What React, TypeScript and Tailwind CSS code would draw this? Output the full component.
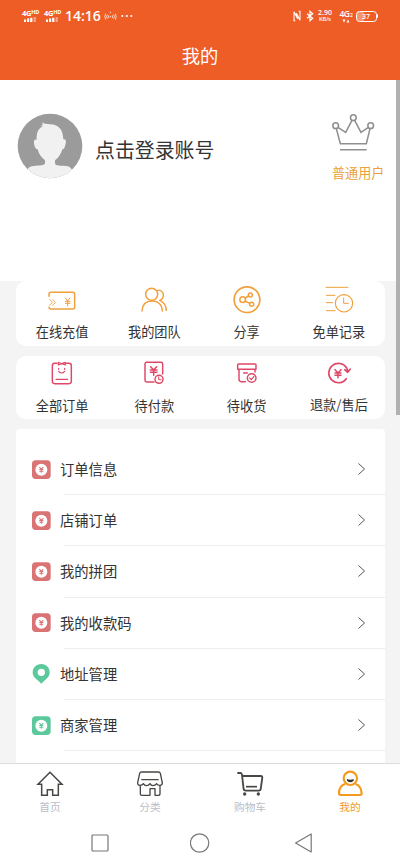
import type { ReactNode } from 'react';

const FONT = "font-['Noto_Sans_CJK_SC','Noto_Sans',sans-serif]";

function SignalGroup() {
  return (
    <div className="flex w-[18px] flex-col items-start">
      <div className="flex h-[6px] items-start font-['Open_Sans',sans-serif] font-bold leading-[6px]">
        <span className="text-[7.5px] tracking-[-0.3px]">4G</span>
        <span className="text-[5.5px] leading-[5px]">HD</span>
      </div>
      <svg width="14" height="5" viewBox="0 0 14 5" className="ml-[2px] mt-[1px]" fill="#fff">
        <rect x="0" y="2.5" width="2" height="2.5" />
        <rect x="3" y="1.5" width="2.2" height="3.5" />
        <rect x="6.2" y="0.8" width="2.2" height="4.2" />
        <rect x="9.6" y="0" width="2.2" height="5" opacity="0.45" />
      </svg>
    </div>
  );
}

function StatusBar() {
  return (
    <div className="flex h-8 items-center pl-[22px] pr-[22px] text-white">
      <SignalGroup />
      <div className="w-[4px]" />
      <SignalGroup />
      <span className="ml-[3px] w-[36px] whitespace-nowrap font-['Open_Sans',sans-serif] text-[14px] font-semibold leading-4">14:16</span>
      <svg width="13" height="12" viewBox="0 0 39 36" className="ml-[3px]" fill="none" stroke="#fff" strokeWidth="2.2">
        <path d="M5 11Q0 20 5 29M10 14Q6 20 10 26M34 11Q39 20 34 29M29 14Q33 20 29 26M14 16V24M25 16V24M19 5V10M19 18V22" />
      </svg>
      <svg width="12" height="4" viewBox="0 0 12 4" className="ml-[4px]" fill="#fff">
        <circle cx="1.3" cy="2" r="1.1" />
        <circle cx="5.8" cy="2" r="1.1" />
        <circle cx="10.3" cy="2" r="1.1" />
      </svg>
      <div className="flex-1" />
      <svg width="8" height="12" viewBox="0 0 24 36" className="-translate-x-px" fill="none" stroke="#fff" strokeWidth="3.2">
        <path d="M7 32H3V5L14 26V14M17 4H21V31L10 10V22" />
      </svg>
      <svg width="8" height="12" viewBox="0 0 24 36" className="ml-[4px]" fill="none" stroke="#fff" strokeWidth="3.8">
        <path d="M3 11L20 25L12 32V4L20 11L3 25" />
      </svg>
      <div className="ml-[4px] flex w-[15px] flex-col items-center font-['Open_Sans',sans-serif] font-semibold">
        <span className="text-[7px] leading-[7px]">2.90</span>
        <span className="whitespace-nowrap text-[5.5px] leading-[7px]">KB/s</span>
      </div>
      <div className="ml-[7px] flex w-[13px] flex-col font-['Open_Sans',sans-serif] font-semibold">
        <div className="flex items-end leading-[8px]">
          <span className="text-[8.5px] tracking-[-0.5px]">4G</span>
          <span className="ml-[0.5px] text-[5px] leading-[6px]">2</span>
        </div>
        <svg width="8" height="4" viewBox="0 0 8 4" className="ml-[2px] mt-[1px]" fill="#fff">
          <path d="M0.5 0.5H3.5L2 3.5ZM4.5 3.5H7.5L6 0.5Z" />
        </svg>
      </div>
      <div className="ml-[3px] flex items-center">
        <div className="flex h-[11px] w-[21px] items-center justify-center rounded-[3.5px] border border-white bg-gradient-to-r from-white/35 from-37% to-transparent to-37% font-['Open_Sans',sans-serif] text-[7px] font-semibold leading-none">
          37
        </div>
        <div className="h-[4px] w-[1.5px] rounded-r bg-white" />
      </div>
    </div>
  );
}

function Avatar() {
  return (
    <svg width="66" height="66" viewBox="51 37 198 198" className="block">
      <clipPath id="avatar-circle">
        <circle cx="150" cy="136" r="97" />
      </clipPath>
      <g clipPath="url(#avatar-circle)">
        <rect x="50" y="36" width="200" height="200" fill="#9b9b9b" />
        <path
          d="M127 65C131 70 139 69 151 71C174 72 187 85 189 107L190 116C199 114 200 124 194 139C192 145 190 146 187 146C182 162 176 171 165 179V188C167 197 181 195 198 196C211 197 216 203 219 219V240H78V216C83 202 88 197 101 196C121 194 132 196 135 188V179C124 170 116 160 113 146C108 146 105 142 103 134C100 122 103 114 110 117C109 97 114 83 130 77L121 77L128 73Z"
          fill="#f1f1f1"
        />
      </g>
    </svg>
  );
}

function Crown() {
  return (
    <svg width="44" height="38" viewBox="96 99 132 114" fill="none" stroke="#8f8f8f" strokeWidth="4.6">
      <circle cx="107" cy="137" r="8.5" />
      <circle cx="160" cy="113" r="8.5" />
      <circle cx="212" cy="137" r="8.5" />
      <path d="M109 146L121 191H199L210 146M115 143L137 157L156 121M164 121L183 157L204 143M120 209H200" />
    </svg>
  );
}

function CellIcon({ viewBox, color, children }: { viewBox: string; color: string; children: ReactNode }) {
  return (
    <svg width="32" height="32" viewBox={viewBox} fill="none" stroke={color} strokeWidth="4.4" strokeLinecap="round" strokeLinejoin="round" className="block shrink-0">
      {children}
    </svg>
  );
}

function Cell({ icon, label, labelClass }: { icon: ReactNode; label: string; labelClass: string }) {
  return (
    <div className="flex flex-col items-center">
      {icon}
      <span className={`whitespace-nowrap text-[13.2px] leading-5 text-[#333] ${labelClass}`}>{label}</span>
    </div>
  );
}

const ORANGE = '#f0a03c';
const PINK = '#df4766';

const RechargeIcon = (
  <CellIcon viewBox="138 42 96 96" color={ORANGE}>
    <path d="M147 79V73Q147 67 153 67H218Q224 67 224 73V111Q224 117 218 117H153Q147 117 147 112" />
    <path d="M149 88L157 97L149 106M158 88L166 97L158 106" strokeWidth="2.6" />
    <path d="M196 84L203 93L210 84M203 93V108M196 94H210M196 100H210" strokeWidth="3" />
  </CellIcon>
);

const TeamIcon = (
  <CellIcon viewBox="415 42 96 96" color={ORANGE}>
    <circle cx="456" cy="73" r="18" />
    <path d="M427 123C428 104 439 93 457 93C475 93 487 104 488 123M472 62C481 57 491 65 491 76C491 83 487 89 480 91C492 96 499 104 500 121" />
  </CellIcon>
);

const ShareIcon = (
  <CellIcon viewBox="92 42 96 96" color={ORANGE}>
    <circle cx="140" cy="89" r="38.5" strokeWidth="5" />
    <circle cx="127" cy="89" r="8.5" />
    <circle cx="150" cy="75" r="6" />
    <circle cx="154" cy="103" r="6" />
    <path d="M134 84L145 78M134 93L148 100" />
  </CellIcon>
);

const RecordIcon = (
  <CellIcon viewBox="369 42 96 96" color={ORANGE}>
    <path d="M378 52H444M379 76H405M379 98H398M379 122H405" strokeWidth="3" />
    <circle cx="432" cy="100" r="26" strokeWidth="3.4" />
    <path d="M431 84V100H445" strokeWidth="3" />
  </CellIcon>
);

const AllOrdersIcon = (
  <CellIcon viewBox="138 36 96 96" color={PINK}>
    <path d="M171 55H164Q157 55 157 62V109Q157 116 164 116H207Q214 116 214 109V62Q214 55 207 55H199" />
    <path d="M175 52L185 56L196 52V60L185 56L175 60ZM168 103H203" strokeWidth="3.5" />
    <path d="M176 70V73M194 70V73M176 79Q185 89 194 79" strokeWidth="3.5" />
  </CellIcon>
);

const PendingPayIcon = (
  <CellIcon viewBox="415 36 96 96" color={PINK}>
    <path d="M463 111H441Q436 111 436 106V57Q436 52 441 52H484Q489 52 489 57V87" />
    <path d="M453 65L462 75L471 65M462 75V91M452 75H472M452 82H472" />
    <circle cx="478" cy="103" r="12" />
    <path d="M477 96V104H484" strokeWidth="3" />
  </CellIcon>
);

const PendingReceiveIcon = (
  <CellIcon viewBox="92 36 96 96" color={PINK}>
    <path d="M115 57H164Q167 57 167 60V73H112V60Q112 57 115 57ZM116 73V103Q116 110 123 110H135M164 73V81M130 84H141" />
    <circle cx="154" cy="99" r="13" />
    <path d="M148 99L153 104L161 94" strokeWidth="3.4" />
  </CellIcon>
);

const RefundIcon = (
  <CellIcon viewBox="369 36 96 96" color={PINK}>
    <path d="M439 101A29 29 0 1 1 440 69Q443 74 443 81M434 74L443 82L451 72" strokeWidth="4.8" />
    <path d="M405 74L414 84L423 74M414 84V98M405 84H423M405 91H423" />
  </CellIcon>
);

function YenBadge({ color }: { color: string }) {
  return (
    <svg width="19" height="19" viewBox="0 0 57 57" className="block">
      <rect x="0" y="1" width="56" height="56" rx="11" fill={color} />
      <circle cx="28" cy="29" r="18" fill="#fff" />
      <path d="M22 21L28 28L34 21M28 28V38M22 28.5H34M22 33.5H34" fill="none" stroke={color} strokeWidth="3.2" />
    </svg>
  );
}

function PinBadge() {
  return (
    <svg width="19" height="21" viewBox="0 0 57 63" className="block">
      <path d="M28 3C12 3 2 14 2 28C2 41 12 47 28 62C44 47 53 41 53 28C53 14 43 3 28 3Z" fill="#5bc99b" />
      <circle cx="28" cy="28" r="11" fill="#fff" />
    </svg>
  );
}

const RED = '#da7373';
const GREEN = '#5bc99b';

const rows: { label: string; icon: ReactNode }[] = [
  { label: '订单信息', icon: <YenBadge color={RED} /> },
  { label: '店铺订单', icon: <YenBadge color={RED} /> },
  { label: '我的拼团', icon: <YenBadge color={RED} /> },
  { label: '我的收款码', icon: <YenBadge color={RED} /> },
  { label: '地址管理', icon: <PinBadge /> },
  { label: '商家管理', icon: <YenBadge color={GREEN} /> },
];

function MenuRow({ label, icon }: { label: string; icon: ReactNode }) {
  return (
    <div className="flex h-[51.2px] shrink-0 flex-col">
      <div className="flex flex-1 items-center pl-4 pr-[19px]">
        <div className="w-[19px]">{icon}</div>
        <span className="ml-[9px] text-[14.3px] leading-5 text-[#333]">{label}</span>
        <svg width="9" height="14" viewBox="0 0 9 14" className="ml-auto" fill="none" stroke="#555" strokeWidth="1">
          <path d="M1.5 1.5L7.5 7L1.5 12.5" />
        </svg>
      </div>
      <div className="ml-12 h-px bg-[#eeeeee]" />
    </div>
  );
}

function TabItem({ icon, label, color }: { icon: ReactNode; label: string; color: string }) {
  return (
    <div className="flex flex-col items-center pt-[5px]">
      {icon}
      <span className={`text-[10.7px] leading-4 ${color}`}>{label}</span>
    </div>
  );
}

function TabIcon({ viewBox, children }: { viewBox: string; children: ReactNode }) {
  return (
    <svg width="30" height="30" viewBox={viewBox} fill="none" stroke="#484743" strokeWidth="4.5" strokeLinejoin="round" className="block">
      {children}
    </svg>
  );
}

function TabBar() {
  return (
    <div className="grid h-[57px] shrink-0 grid-cols-4 border-t border-[#dcdcdc] bg-white">
      <TabItem
        label="首页"
        color="text-[#babdc8]"
        icon={
          <TabIcon viewBox="105 57 90 90">
            <path d="M150 67L114 103H125V136H142V119H158V136H175V103H186Z" strokeLinejoin="miter" />
          </TabIcon>
        }
      />
      <TabItem
        label="分类"
        color="text-[#babdc8]"
        icon={
          <TabIcon viewBox="405 57 90 90">
            <path d="M425 66H475Q480 66 481 70L487 99Q487 105 480 106Q472 106 470 101Q465 107 459 107Q453 107 450 101Q446 107 440 107Q433 107 430 101Q427 106 420 106Q412 105 413 98L419 70Q420 66 425 66ZM424 89H476M421 107V132Q421 136 426 136H450V116H465V136H474Q480 136 480 131V107" strokeWidth="4" />
          </TabIcon>
        }
      />
      <TabItem
        label="购物车"
        color="text-[#babdc8]"
        icon={
          <TabIcon viewBox="105 57 90 90">
            <path d="M112 69H122Q125 69 126 75L131 118Q132 122 137 122H177Q181 122 182 118L187 82Q187 78 182 78H127" strokeWidth="5.5" />
            <path d="M138 110H171" strokeWidth="5" />
            <circle cx="134" cy="132" r="5" fill="#484743" stroke="none" />
            <circle cx="175" cy="132" r="5" fill="#484743" stroke="none" />
          </TabIcon>
        }
      />
      <TabItem
        label="我的"
        color="text-[#f09a1c]"
        icon={
          <TabIcon viewBox="405 57 90 90">
            <g stroke="#f49b1e" strokeWidth="6.5">
              <circle cx="451" cy="85" r="20" />
              <path d="M436 102C424 105 417 114 417 130Q417 135 422 135H480Q485 135 485 130C484 114 478 105 466 102" />
            </g>
            <path d="M441 87Q451 92 461 87V92Q451 101 441 92Z" fill="#333" stroke="none" />
          </TabIcon>
        }
      />
    </div>
  );
}

function SystemNav() {
  return (
    <div className="flex h-[46px] shrink-0 items-center justify-between bg-white pl-[90px] pr-[86px]">
      <svg width="20" height="20" viewBox="0 0 20 20" fill="none" stroke="#777" strokeWidth="1.2">
        <rect x="2" y="2" width="16" height="16" rx="1" />
      </svg>
      <svg width="20" height="22" viewBox="0 0 20 22" fill="none" stroke="#777" strokeWidth="1.2">
        <circle cx="10" cy="11" r="9.2" transform="translate(-0.4 0)" />
      </svg>
      <svg width="24" height="22" viewBox="0 0 24 22" fill="none" stroke="#777" strokeWidth="1.2" strokeLinejoin="round">
        <path d="M22 2V20L6.4 11Z" transform="translate(-0.8 0)" />
      </svg>
    </div>
  );
}

export default function App() {
  return (
    <div className={`flex h-[866px] w-[400px] flex-col overflow-hidden bg-white ${FONT}`}>
      <header className="h-20 shrink-0 bg-[#ee5d26]">
        <StatusBar />
        <div className="flex h-[46px] items-center justify-center text-[18.3px] leading-6 text-white">我的</div>
      </header>

      <main className="flex min-h-0 flex-1 overflow-hidden bg-[#f4f4f4]">
        <div className="flex w-[396px] shrink-0 flex-col">
          <section className="flex h-[201px] shrink-0 items-start bg-white">
            <div className="ml-[17px] mt-[33px]">
              <Avatar />
            </div>
            <span className="ml-[12px] mt-[56px] text-[19.9px] leading-7 text-[#333]">点击登录账号</span>
            <div className="ml-auto mr-[11px] mt-[33px] flex w-[53px] flex-col items-start">
              <Crown />
              <span className="mt-[12px] whitespace-nowrap text-[13.1px] leading-5 text-[#eb9f3a]">普通用户</span>
            </div>
          </section>

          <div className="flex min-h-0 flex-1 flex-col overflow-hidden pl-4">
            <section className="grid h-[65px] w-[369px] shrink-0 grid-cols-4 rounded-[10px] bg-white pt-[3px]">
              <Cell icon={RechargeIcon} label="在线充值" labelClass="mt-[6px]" />
              <Cell icon={TeamIcon} label="我的团队" labelClass="mt-[6px]" />
              <Cell icon={ShareIcon} label="分享" labelClass="mt-[6px]" />
              <Cell icon={RecordIcon} label="免单记录" labelClass="mt-[6px]" />
            </section>

            <section className="mt-[10px] grid h-[63px] w-[369px] shrink-0 grid-cols-4 rounded-[10px] bg-white pt-[1px]">
              <Cell icon={AllOrdersIcon} label="全部订单" labelClass="mt-[7px]" />
              <Cell icon={PendingPayIcon} label="待付款" labelClass="mt-[7px]" />
              <Cell icon={PendingReceiveIcon} label="待收货" labelClass="mt-[7px]" />
              <Cell icon={RefundIcon} label="退款/售后" labelClass="mt-[6px]" />
            </section>

            <section className="mt-[10px] flex min-h-0 w-[369px] flex-1 flex-col overflow-hidden rounded-t-[4px] bg-white pt-[15px]">
              {rows.map((row) => (
                <MenuRow key={row.label} label={row.label} icon={row.icon} />
              ))}
            </section>
          </div>
        </div>
        <div className="h-[335px] w-1 bg-[#b1b1b1]" />
      </main>

      <TabBar />
      <SystemNav />
    </div>
  );
}
